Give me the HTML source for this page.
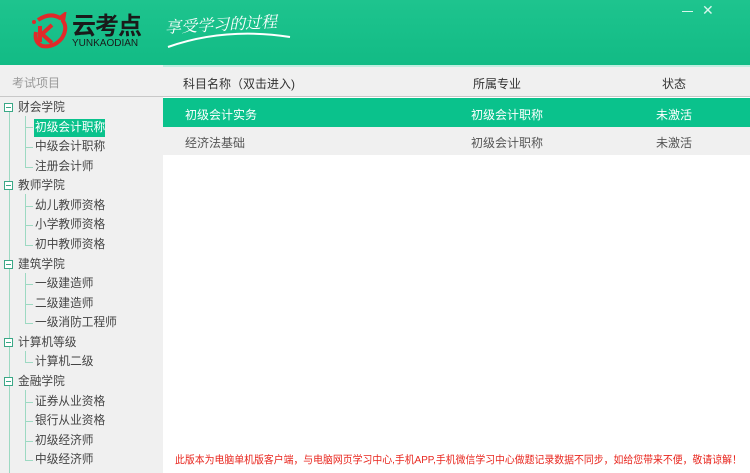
<!DOCTYPE html><html><head><meta charset="utf-8"><style>
*{margin:0;padding:0;box-sizing:border-box}
body{width:750px;height:473px;overflow:hidden;font-family:"Liberation Sans","Noto Sans CJK SC",sans-serif;font-size:12px;color:#444;background:#fff;position:relative}
.a{position:absolute;white-space:nowrap}
.hd{left:0;top:0;width:750px;height:65px;background:linear-gradient(#1ec48e,#12bb85)}
.sb{left:0;top:65px;width:163px;height:408px;background:#f0f0f0}
.t{position:absolute;white-space:nowrap;line-height:16px;font-size:11.7px}
.vl{position:absolute;width:1px;background:#9dd9c2}
.hl{position:absolute;height:1px;background:#9dd9c2}
.bx{position:absolute;width:9px;height:9px;border:1px solid #3aa886;background:#fff}
.bx:after{content:"";position:absolute;left:1px;top:3px;width:5px;height:1px;background:#3aa886}
</style></head><body>
<div class="a hd"></div>
<div class="a" style="left:0;top:65px;width:750px;height:2px;background:#bfeee0"></div>
<svg class="a" style="left:30px;top:12px" width="40" height="40" viewBox="0 0 40 40"><path d="M8 8 Q20 0 30 6 L34 3 L33 9 Q38 16 32 26 Q24 36 12 34 Q4 30 6 20" fill="none" stroke="#e12a2a" stroke-width="4"/><rect x="8" y="14" width="4" height="16" fill="#e12a2a"/><path d="M12 22 L22 13 M12 22 L22 31" stroke="#e12a2a" stroke-width="4"/><circle cx="4" cy="10" r="2" fill="#e12a2a"/></svg>
<div class="a" style="left:72px;top:13px;font-size:24px;font-weight:bold;color:#1a1a1a;line-height:28px;letter-spacing:-1px">云考点</div>
<div class="a" style="left:72px;top:38px;font-size:10px;color:#1a1a1a">YUNKAODIAN</div>
<div class="a" style="left:165px;top:12px;font-size:16px;color:#fff;font-style:italic;transform:rotate(-3deg);font-family:'Noto Serif CJK SC',serif">享受学习的过程</div>
<svg class="a" style="left:165px;top:25px" width="130" height="25"><path d="M3 22 Q60 2 125 12" fill="none" stroke="#fff" stroke-width="2"/></svg>
<div class="a" style="left:682px;top:11px;width:11px;height:1px;background:#d8f6ec"></div>
<div class="a" style="left:702px;top:2px;font-size:14px;color:#d8f6ec">✕</div>
<div class="a sb"></div>
<div class="a" style="left:12px;top:74px;color:#999">考试项目</div>
<div class="a" style="left:0;top:96px;width:163px;height:1px;background:#c8c8c8"></div>
<div class="a" style="left:163px;top:67px;width:587px;height:30px;background:#f0f0f0"></div>
<div class="a" style="left:163px;top:96px;width:587px;height:1px;background:#c8c8c8"></div>
<div class="a" style="left:183px;top:75px;color:#333">科目名称（双击进入)</div>
<div class="a" style="left:473px;top:75px;color:#333">所属专业</div>
<div class="a" style="left:662px;top:75px;color:#333">状态</div>
<div class="a" style="left:163px;top:98px;width:587px;height:29px;background:#0ac28c"></div>
<div class="a" style="left:185px;top:106px;color:#fff">初级会计实务</div>
<div class="a" style="left:471px;top:106px;color:#fff">初级会计职称</div>
<div class="a" style="left:656px;top:106px;color:#fff">未激活</div>
<div class="a" style="left:163px;top:127px;width:587px;height:28px;background:#f0f0f0"></div>
<div class="a" style="left:185px;top:134px;color:#555">经济法基础</div>
<div class="a" style="left:471px;top:134px;color:#555">初级会计职称</div>
<div class="a" style="left:656px;top:134px;color:#555">未激活</div>
<div class="a" style="left:175px;top:452px;font-size:10.5px;color:#e8261e;transform:scaleX(0.94);transform-origin:0 0">此版本为电脑单机版客户端，与电脑网页学习中心,手机APP,手机微信学习中心做题记录数据不同步，如给您带来不便，敬请谅解！</div>
<div class="vl" style="left:9px;top:112px;height:361px"></div>
<div class="vl" style="left:25px;top:116px;height:52px"></div>
<div class="vl" style="left:25px;top:194px;height:52px"></div>
<div class="vl" style="left:25px;top:273px;height:51px"></div>
<div class="vl" style="left:25px;top:351px;height:12px"></div>
<div class="vl" style="left:25px;top:390px;height:71px"></div>
<div class="a" style="left:34px;top:119px;width:71px;height:18px;background:#0ac28c"></div>
<div class="t" style="left:18px;top:100px">财会学院</div><div class="bx" style="left:4px;top:103px"></div>
<div class="t" style="left:35px;top:120px;color:#fff">初级会计职称</div><div class="hl" style="left:26px;top:127px;width:7px"></div>
<div class="t" style="left:35px;top:139px">中级会计职称</div><div class="hl" style="left:26px;top:147px;width:7px"></div>
<div class="t" style="left:35px;top:159px">注册会计师</div><div class="hl" style="left:26px;top:167px;width:7px"></div>
<div class="t" style="left:18px;top:178px">教师学院</div><div class="bx" style="left:4px;top:181px"></div>
<div class="t" style="left:35px;top:198px">幼儿教师资格</div><div class="hl" style="left:26px;top:206px;width:7px"></div>
<div class="t" style="left:35px;top:217px">小学教师资格</div><div class="hl" style="left:26px;top:225px;width:7px"></div>
<div class="t" style="left:35px;top:237px">初中教师资格</div><div class="hl" style="left:26px;top:245px;width:7px"></div>
<div class="t" style="left:18px;top:257px">建筑学院</div><div class="bx" style="left:4px;top:260px"></div>
<div class="t" style="left:35px;top:276px">一级建造师</div><div class="hl" style="left:26px;top:284px;width:7px"></div>
<div class="t" style="left:35px;top:296px">二级建造师</div><div class="hl" style="left:26px;top:304px;width:7px"></div>
<div class="t" style="left:35px;top:315px">一级消防工程师</div><div class="hl" style="left:26px;top:323px;width:7px"></div>
<div class="t" style="left:18px;top:335px">计算机等级</div><div class="bx" style="left:4px;top:338px"></div>
<div class="t" style="left:35px;top:354px">计算机二级</div><div class="hl" style="left:26px;top:362px;width:7px"></div>
<div class="t" style="left:18px;top:374px">金融学院</div><div class="bx" style="left:4px;top:377px"></div>
<div class="t" style="left:35px;top:394px">证券从业资格</div><div class="hl" style="left:26px;top:402px;width:7px"></div>
<div class="t" style="left:35px;top:413px">银行从业资格</div><div class="hl" style="left:26px;top:421px;width:7px"></div>
<div class="t" style="left:35px;top:433px">初级经济师</div><div class="hl" style="left:26px;top:441px;width:7px"></div>
<div class="t" style="left:35px;top:452px">中级经济师</div><div class="hl" style="left:26px;top:460px;width:7px"></div>
</body></html>
